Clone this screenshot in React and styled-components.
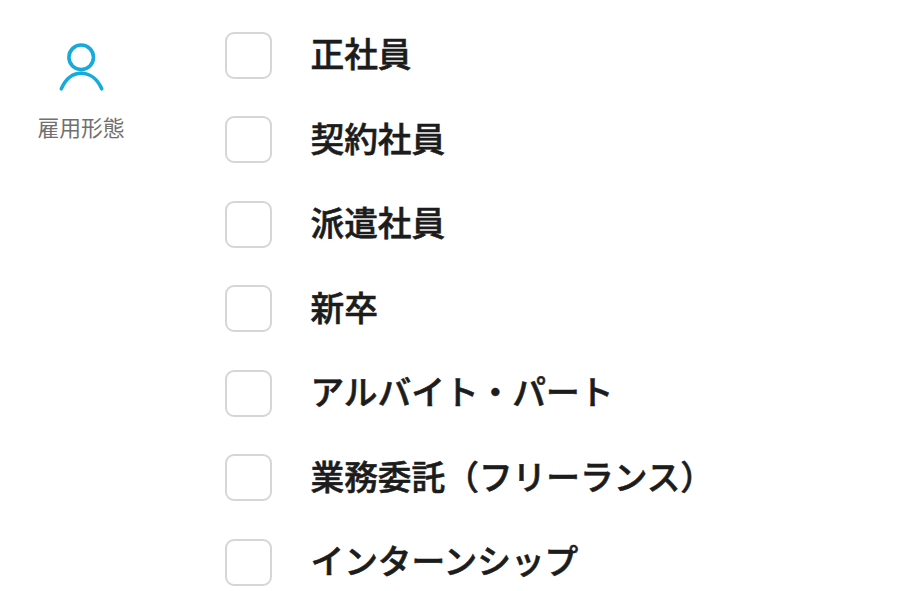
import React from "react"
import styled, { createGlobalStyle } from "styled-components"

const GlobalStyle = createGlobalStyle`
  body {
    margin: 0;
    background: #ffffff;
    font-family: "Noto Sans CJK JP", sans-serif;
  }
`
const FilterWrap = styled.div`
  display: flex;
  width: 920px;
  height: 591px;
  overflow: hidden;
  background: #ffffff;
`
const CategoryColumn = styled.div`
  display: flex;
  flex-direction: column;
  align-items: center;
  width: 162px;
  padding-top: 42px;
  box-sizing: border-box;
`
const CategoryIcon = styled.svg`
  width: 50px;
  height: 50px;
`
const CategoryName = styled.div`
  margin-top: 19px;
  font-size: 21.8px;
  line-height: 32px;
  color: #707070;
`
const OptionList = styled.div`
  display: flex;
  flex-direction: column;
  padding: 13px 0 0 63.3px;
`
const OptionRow = styled.label`
  display: flex;
  flex-shrink: 0;
  align-items: center;
  height: 84.5px;
`
const OptionBox = styled.input`
  appearance: none;
  width: 47px;
  height: 47px;
  margin: 0 38.2px 0 0;
  box-sizing: border-box;
  border: 2px solid #d6d6d6;
  border-radius: 9px;
  background: #ffffff;
`
const OptionName = styled.span`
  padding-bottom: 4px;
  font-size: 33.7px;
  font-weight: 500;
  line-height: 48px;
  color: #1c1c1c;
  -webkit-text-stroke: 0.6px #1c1c1c;
`

const options = [
  "正社員",
  "契約社員",
  "派遣社員",
  "新卒",
  "アルバイト・パート",
  "業務委託（フリーランス）",
  "インターンシップ",
]

const App = () => {
  return (
    <React.Fragment>
      <GlobalStyle />
      <FilterWrap>
        <CategoryColumn>
          <CategoryIcon
            viewBox="0 0 50 50"
            fill="none"
            stroke="#17aadd"
            strokeWidth="3.6"
            strokeLinecap="round"
          >
            <circle cx="25.2" cy="15.3" r="12.3" />
            <path d="M5.3 46.8C9.3 37.8 16 31.3 25.2 31.3S41.7 37.8 45.7 46.8" />
          </CategoryIcon>
          <CategoryName>雇用形態</CategoryName>
        </CategoryColumn>
        <OptionList>
          {options.map(name => (
            <OptionRow key={name}>
              <OptionBox type="checkbox" />
              <OptionName>{name}</OptionName>
            </OptionRow>
          ))}
        </OptionList>
      </FilterWrap>
    </React.Fragment>
  )
}

export default App
